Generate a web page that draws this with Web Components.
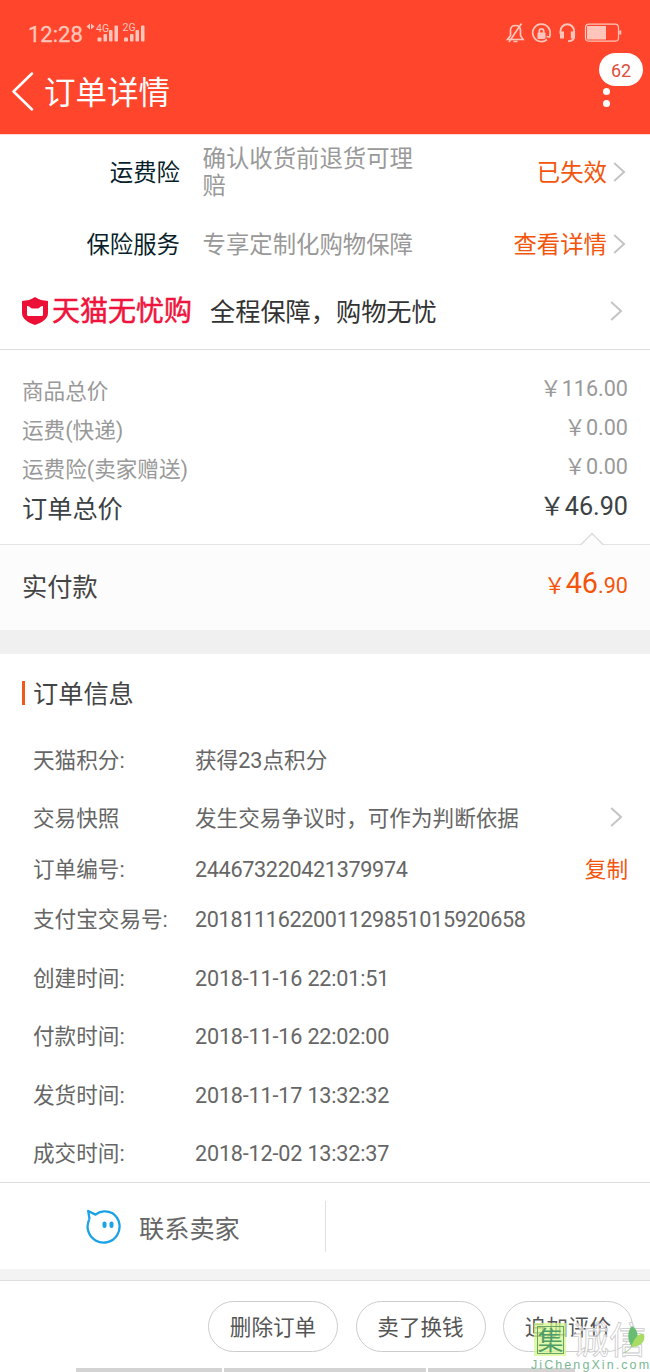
<!DOCTYPE html>
<html lang="zh-CN">
<head>
<meta charset="utf-8">
<title>订单详情</title>
<style>
body{margin:0;background:#fff;font-family:Roboto,"Noto Sans CJK SC",sans-serif;color:#444;overflow:hidden}
</style>
</head>
<body>
<order-page></order-page>
<script>
const define = (name, html) => {
  const t = document.createElement('template');
  t.innerHTML = html;
  customElements.define(name, class extends HTMLElement {
    constructor() {
      super();
      this.attachShadow({mode: 'open'}).append(t.content.cloneNode(true));
    }
  });
};

define('status-bar', `
<style>
:host{display:flex;height:66px;box-sizing:border-box;padding:0 28px 0 28px;align-items:center;justify-content:space-between;color:#ffc5ba}
.time{font-size:22px;line-height:26px;letter-spacing:0;font-weight:400;-webkit-text-stroke:.3px currentColor;margin-top:3px}
.l,.r{display:flex;align-items:center}
svg{display:block;overflow:visible}
text{font:10.5px Roboto,sans-serif;fill:currentColor}
</style>
<div class="l"><span class="time">12:28</span>
<svg width="62" height="24" viewBox="85 21 62 24" style="margin-left:2px" fill="currentColor">
<path d="M86.500 26.500l3.500-3v6zM94.500 26.500l-3.500-3v6z"/>
<text x="96" y="32">4G</text><text x="122.500" y="31">2G</text>
<rect x="97.500" y="37.500" width="4" height="4" rx="1"/><rect x="103.500" y="34" width="3.500" height="7.500" rx="1"/><rect x="109" y="30" width="3.500" height="11.500" rx="1"/><rect x="114.500" y="25.500" width="3.500" height="16" rx="1"/>
<rect x="124" y="37.500" width="4" height="4" rx="1"/><rect x="130" y="34" width="3.500" height="7.500" rx="1"/><rect x="135.500" y="30" width="3.500" height="11.500" rx="1"/><rect x="141" y="25.500" width="3.500" height="16" rx="1"/>
</svg></div>
<svg width="118" height="24" viewBox="504 21 118 24" fill="none" stroke="currentColor" stroke-width="1.700">
<path d="M507.500 39.500h15.500l-2.500-4v-5c0-3-2-5-5-5s-5 2-5 5v5zM509 42l12.500-18.500M513.500 41.500h4"/>
<path d="M547 39.500a8.700 8.700 0 1 1 2.700-4M546.500 36.500l3 .5 1-3"/>
<rect x="537.500" y="32.500" width="8" height="6.500" rx="1" fill="currentColor" stroke="none"/><path d="M539.300 33v-2a2.200 2.200 0 0 1 4.400 0v2"/>
<path d="M560.500 34v-3a6.800 6.800 0 0 1 13.600 0v5c0 3-2 5.300-6 5.300" stroke-width="1.900"/>
<path d="M562 31.500v7M572.800 31.500v7" stroke-width="4"/>
<rect x="585.500" y="24.200" width="33" height="17" rx="3.500" stroke-width="1.200"/><path d="M587 26h19v13.500h-19z" fill="currentColor" stroke="none"/><path d="M620.300 30.500v4" stroke-width="2"/>
</svg>`);

define('title-bar', `
<style>
:host{display:flex;height:68px;align-items:flex-start;position:relative;color:#fff;padding-left:11px}
.back{margin-top:6px;display:block}
h1{font-size:31.500px;font-weight:400;line-height:40px;margin:8px 0 0 10px}
.badge{position:absolute;left:599px;top:-13px;width:44px;height:33px;border-radius:17px;background:#fff;color:#dd4d3b;font-size:18px;line-height:36px;text-align:center}
.dots{position:absolute;left:603px;top:22px;display:grid;gap:5px}
.dots i{width:7px;height:7px;border-radius:50%;background:#fff}
</style>
<svg class="back" width="23" height="39" viewBox="0 0 23 39" fill="none" stroke="#fff" stroke-width="2.500" stroke-linecap="round" stroke-linejoin="round"><path d="M21 1.500L2.500 19.500 21 37.500"/></svg>
<h1><slot></slot></h1>
<div class="dots"><i></i><i></i></div>
<div class="badge">62</div>`);

define('chevron-right', `
<style>:host{display:block;width:13px;height:20px}svg{display:block}</style>
<svg width="13" height="20" viewBox="0 0 13 20" fill="none" stroke="#c4c4c4" stroke-width="2"><path d="M1.200 1L11 10 1.200 19"/></svg>`);

define('service-row', `
<style>
:host{display:flex;align-items:center;height:72px;font-size:23.400px;line-height:27px;padding-right:24px}
.k,.v,.a{padding-top:2px}
.k{width:180px;text-align:right;color:#0a1f2c}
.v{width:214px;margin-left:22.500px;color:#999}
.a{margin-left:auto;margin-right:6px;color:#f4550d}
</style>
<span class="k"><slot name="key"></slot></span><span class="v"><slot></slot></span><span class="a"><slot name="action"></slot></span><chevron-right></chevron-right>`);

define('guarantee-row', `
<style>
:host{display:flex;align-items:center;height:70px;padding:0 27px 7px 22px;box-sizing:border-box;border-bottom:1px solid #ddd}
svg{display:block}
b{font-size:28px;font-weight:400;-webkit-text-stroke:.5px #f0143c;line-height:32px;color:#f0143c;margin-left:4px;width:141px;white-space:nowrap;padding-top:1px}
span{font-size:25.200px;line-height:30px;color:#333;margin:3px auto 0 17px}
</style>
<svg width="26" height="28" viewBox="0 0 26 28"><path d="M13 0C9 3 5 3.500 0 4v12c0 6 6 9.500 13 12 7-2.500 13-6 13-12V4C21 3.500 17 3 13 0z" fill="#ec1036"/><path d="M5 9C7.500 9 8.500 11 10 11.500h6C17.500 11 18.500 9 21 9v8.500q0 1.500-1.500 1.500h-13Q5 19 5 17.500z" fill="#fff"/></svg>
<b>天猫无忧购</b><span><slot></slot></span><chevron-right></chevron-right>`);

define('price-row', `
<style>
:host{display:flex;justify-content:space-between;height:39px;line-height:39px;padding:0 22px;font-size:21.600px;color:#999}
:host([total]){font-size:25.200px;color:#3d4245;height:42px;line-height:42px}
.p{margin-top:-3px}
</style>
<span><slot></slot></span><span class="p"><slot name="price"></slot></span>`);

define('pay-row', `
<style>
:host{display:flex;align-items:center;justify-content:space-between;position:relative;height:86px;box-sizing:border-box;border-top:1px solid #e4e4e4;background:#fcfcfc;padding:0 22px 6px;font-size:25.200px;color:#444}
.p{color:#f4550d;font-size:21.600px;line-height:34px}
.p b{font-weight:400;font-size:28.800px}
svg{position:absolute;left:579px;top:-13px}
</style>
<svg width="26" height="14" viewBox="0 0 26 14"><path d="M1.500 13L13 1.500 24.500 13v1h-23z" fill="#fcfcfc"/><path d="M1.500 13L13 1.500 24.500 13" fill="none" stroke="#ddd" stroke-width="1.500"/></svg>
<span>实付款</span><span class="p">&#xFFE5;<b>46</b>.90</span>`);

define('section-title', `
<style>
:host{display:flex;align-items:center;height:79px;padding-left:22px;font-size:25.200px;line-height:32px;color:#444}
i{width:3px;height:24px;background:#f0591a;margin-right:8px;margin-top:-1px}
span{padding-top:3px}
</style><i></i><span><slot></slot></span>`);

define('info-row', `
<style>
:host{display:flex;align-items:center;height:var(--h,58.600px);padding:0 22px 0 33px;font-size:21.600px;line-height:30px;color:#666}
.k{width:162px;flex:none;white-space:nowrap}
.a{margin-left:auto;color:#f4550d}
</style>
<span class="k"><slot name="key"></slot></span><span><slot></slot></span><span class="a"><slot name="action"></slot></span>`);

define('contact-bar', `
<style>
:host{display:flex;height:87px;box-sizing:border-box;border-top:1px solid #ddd}
.c{display:flex;align-items:center;width:326px;margin:18px 0 17px;box-sizing:border-box;border-right:1px solid #e0e0e0;padding-left:86px;font-size:25.200px;color:#666}
svg{display:block;margin-right:17px}
</style>
<div class="c"><svg width="36" height="36" viewBox="0 0 36 36"><path d="M3.500 10.500L2.200 2.500l7.300 3.600C14 2.500 21 1.500 26.500 4.800a16 16 0 1 1-23 5.700" transform="translate(0 -.5)" fill="none" stroke="#1ba2e6" stroke-width="2.300" stroke-linejoin="round"/><rect x="16.500" y="12.500" width="4" height="6.500" rx="2" fill="#1ba2e6"/><rect x="23.500" y="12.500" width="4" height="6.500" rx="2" fill="#1ba2e6"/></svg><slot></slot></div>`);

define('pill-button', `
<style>
:host{display:block;box-sizing:border-box;width:130px;height:51px;border:1px solid #ccc;border-radius:26px;text-align:center;font-size:21.600px;line-height:51px;color:#555}
</style><slot></slot>`);

define('site-mark', `
<style>
:host{display:block;position:absolute;left:530px;top:41px;width:120px;height:50px}
svg{display:block;overflow:visible}
.seal{font:26px "Noto Sans CJK SC",sans-serif;fill:#4f9d68}
.name{font:37px "Noto Sans CJK SC",sans-serif;fill:#fff;fill-opacity:.7;stroke:#c9c9c9;stroke-width:.8}
.url{font:12.500px "Liberation Sans",sans-serif;fill:#79b894;letter-spacing:2.080px}
</style>
<svg width="120" height="50" viewBox="530 1322 120 50">
<rect x="534" y="1323" width="32" height="33" fill="#d6f58e" opacity=".75"/>
<rect x="537.500" y="1326.500" width="26" height="27" fill="none" stroke="#68a562"/>
<text class="seal" x="537.500" y="1349.500">集</text>
<text class="name" x="572" y="1354">诚信</text>
<path d="M632 1347c-5-7-5-16 0-21 7 4 8 14 0 21z" fill="#68bd73"/><path d="M631 1347c4-11 9-14 13-13 2 7-3 13-13 13z" fill="#a8dc63"/><path d="M632 1345q-2 6-9 8" fill="none" stroke="#9acb91"/>
<text class="url" x="531" y="1369">JiChengXin.com</text>
</svg>`);

define('action-bar', `
<style>
:host{display:block;position:relative;height:92px;box-sizing:border-box;border-top:1px solid #ddd}
.b{display:flex;justify-content:flex-end;gap:17.500px;padding:20px 17px 0 0}
.n{display:flex;gap:2px;margin:16px 0 0 76px}
.n i{height:4px;background:#d3d3d3}
</style>
<div class="b"><pill-button>删除订单</pill-button><pill-button>卖了换钱</pill-button><pill-button>追加评价</pill-button></div>
<div class="n"><i style="width:146px"></i><i style="width:202px"></i><i style="width:147px"></i></div>
<site-mark></site-mark>`);

define('order-page', `
<style>
:host{display:block;width:650px;height:1372px;overflow:hidden;background:#fff}
header{background:#ff462d;border-bottom:1px solid #ffd9d3}
.svc{padding-top:1px}
.prices{padding-top:22px;height:172px}
.gap{height:24px;background:#f0f0f0}
.info{height:528px}
.gap.s{height:11px;background:#f3f3f3}
.num{letter-spacing:-.33px}
.date{letter-spacing:-.180px}
</style>
<header><status-bar></status-bar><title-bar>订单详情</title-bar></header>
<section class="svc">
<service-row><span slot="key">运费险</span>确认收货前退货可理赔<span slot="action">已失效</span></service-row>
<service-row><span slot="key">保险服务</span>专享定制化购物保障<span slot="action">查看详情</span></service-row>
<guarantee-row>全程保障&#xFF0C;购物无忧</guarantee-row>
</section>
<section class="prices">
<price-row>商品总价<span slot="price">&#xFFE5;116.00</span></price-row>
<price-row>运费(快递)<span slot="price">&#xFFE5;0.00</span></price-row>
<price-row>运费险(卖家赠送)<span slot="price">&#xFFE5;0.00</span></price-row>
<price-row total>订单总价<span slot="price">&#xFFE5;46.90</span></price-row>
</section>
<pay-row></pay-row>
<div class="gap"></div>
<section class="info">
<section-title>订单信息</section-title>
<info-row style="--h:55px"><span slot="key">天猫积分:</span>获得23点积分</info-row>
<info-row style="--h:62px"><span slot="key">交易快照</span>发生交易争议时&#xFF0C;可作为判断依据<chevron-right slot="action" style="margin:-4px 5px 0 0"></chevron-right></info-row>
<info-row style="--h:40px"><span slot="key">订单编号:</span><span class="num">244673220421379974</span><span slot="action">复制</span></info-row>
<info-row style="--h:60px"><span slot="key">支付宝交易号:</span><span class="num">2018111622001129851015920658</span></info-row>
<info-row style="--h:58px"><span slot="key">创建时间:</span><span class="date">2018-11-16 22:01:51</span></info-row>
<info-row><span slot="key">付款时间:</span><span class="date">2018-11-16 22:02:00</span></info-row>
<info-row><span slot="key">发货时间:</span><span class="date">2018-11-17 13:32:32</span></info-row>
<info-row><span slot="key">成交时间:</span><span class="date">2018-12-02 13:32:37</span></info-row>
</section>
<contact-bar>联系卖家</contact-bar>
<div class="gap s"></div>
<action-bar></action-bar>`);
</script>
</body>
</html>
